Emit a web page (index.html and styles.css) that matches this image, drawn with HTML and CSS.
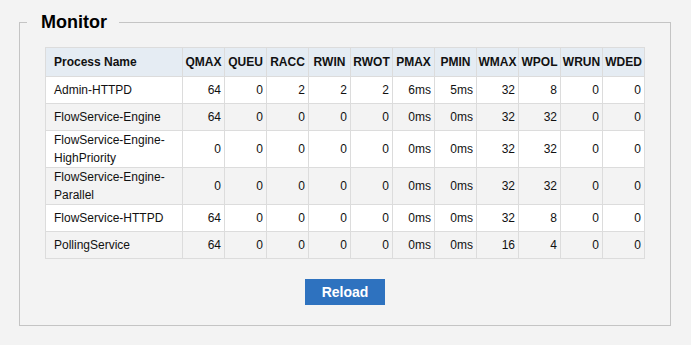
FILE: index.html
```html
<!DOCTYPE html>
<html lang="en">
<head>
    <meta charset="UTF-8">
    <meta name="viewport" content="width=device-width, initial-scale=1.0">
    <title>Monitor</title>
    <link rel="stylesheet" href="styles.css">
</head>
<body>

<fieldset class="monitor">
    <legend>Monitor</legend>
    <div class="monitor-body">
        <table class="process-table">
            <colgroup>
                <col class="col-name">
                <col span="11" class="col-num">
            </colgroup>
            <thead>
                <tr>
                    <th class="name">Process Name</th>
                    <th>QMAX</th>
                    <th>QUEU</th>
                    <th>RACC</th>
                    <th>RWIN</th>
                    <th>RWOT</th>
                    <th>PMAX</th>
                    <th>PMIN</th>
                    <th>WMAX</th>
                    <th>WPOL</th>
                    <th>WRUN</th>
                    <th>WDED</th>
                </tr>
            </thead>
            <tbody id="process-rows"></tbody>
        </table>
        <div class="actions">
            <button type="button" class="reload" onclick="loadRows()">Reload</button>
        </div>
    </div>
</fieldset>

<script>
    const processes = [
        ['Admin-HTTPD', 64, 0, 2, 2, 2, '6ms', '5ms', 32, 8, 0, 0],
        ['FlowService-Engine', 64, 0, 0, 0, 0, '0ms', '0ms', 32, 32, 0, 0],
        ['FlowService-Engine-HighPriority', 0, 0, 0, 0, 0, '0ms', '0ms', 32, 32, 0, 0],
        ['FlowService-Engine-Parallel', 0, 0, 0, 0, 0, '0ms', '0ms', 32, 32, 0, 0],
        ['FlowService-HTTPD', 64, 0, 0, 0, 0, '0ms', '0ms', 32, 8, 0, 0],
        ['PollingService', 64, 0, 0, 0, 0, '0ms', '0ms', 16, 4, 0, 0]
    ];

    function loadRows() {
        const tbody = document.getElementById('process-rows');
        tbody.innerHTML = '';
        processes.forEach(function(row) {
            const tr = document.createElement('tr');
            row.forEach(function(value, i) {
                const td = document.createElement('td');
                td.textContent = value;
                if (i === 0) td.className = 'name';
                tr.appendChild(td);
            });
            tbody.appendChild(tr);
        });
    }

    loadRows();
</script>

</body>
</html>
```

FILE: styles.css
```css
body {
    font-family: "Liberation Sans", Arial, sans-serif;
    font-size: 12px;
    color: #111;
    background-color: #f3f3f3;
    margin: 0;
}
.monitor {
    margin: 12px 20px 0 19px;
    padding: 0;
    min-width: 0;
    border: 1px solid #c4c4c4;
}
.monitor legend {
    font-size: 18px;
    font-weight: bold;
    color: #000;
    margin-left: 7px;
    padding: 0 12px 0 14px;
    line-height: 21px;
}
.monitor-body {
    padding: 14px 25px 20px 25px;
}
.process-table {
    width: 600px;
    table-layout: fixed;
    border-collapse: collapse;
    border: 1px solid #c8c8c8;
    background: #fff;
}
.col-name {
    width: 137px;
}
.col-num {
    width: 42px;
}
.process-table th,
.process-table td {
    border: 1px solid #dcdcdc;
    line-height: 18px;
    padding: 0 3px 0 2px;
    vertical-align: middle;
    text-align: right;
}
.process-table th {
    background: #e5ecf3;
    font-weight: bold;
    text-align: center;
    height: 28px;
    padding: 0 1px;
    white-space: nowrap;
}
.process-table td {
    height: 26px;
}
.process-table .name {
    text-align: left;
    padding-left: 8px;
}
.process-table tbody tr:nth-child(even) td {
    background: #f3f3f3;
}
.actions {
    text-align: center;
    margin-top: 20px;
}
.reload {
    display: block;
    margin: 0 auto;
    background: #2e72bf;
    color: #fff;
    border: none;
    width: 80px;
    height: 26px;
    font-family: "Liberation Sans", Arial, sans-serif;
    font-size: 14px;
    font-weight: bold;
    cursor: pointer;
}
```
